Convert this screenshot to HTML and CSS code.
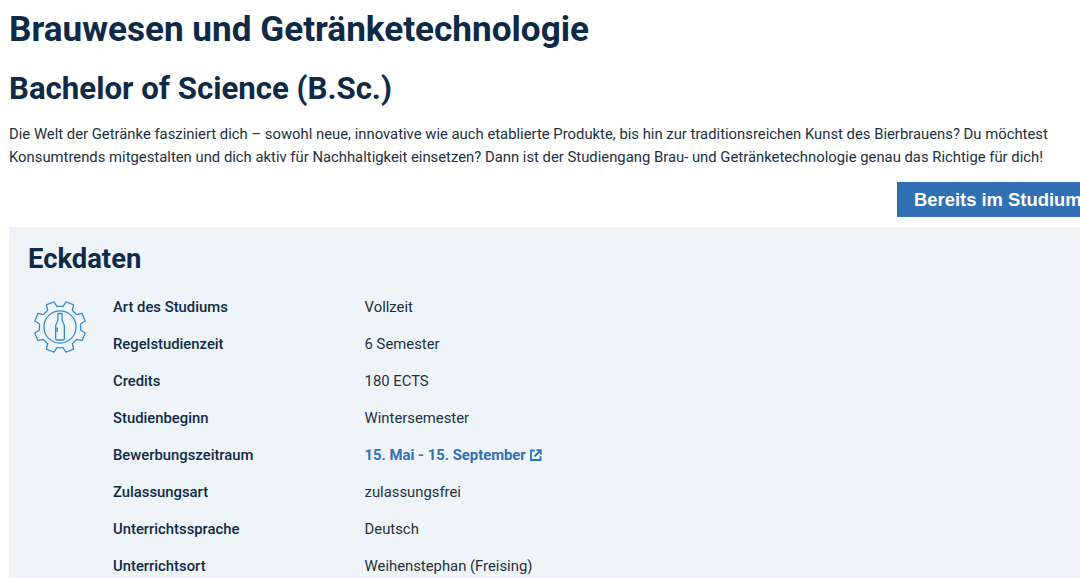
FILE: index.html
```html
<!DOCTYPE html>
<html>
<head>
    <meta charset="utf-8">
    <title>Brauwesen und Getränketechnologie</title>
    <link rel="stylesheet" href="styles.css">
</head>
<body>
    <div id="container">
        <h1>Brauwesen und Getränketechnologie</h1>
        <h2>Bachelor of Science (B.Sc.)</h2>
        <p class="intro">Die Welt der Getränke fasziniert dich – sowohl neue, innovative wie auch etablierte Produkte, bis hin zur traditionsreichen Kunst des Bierbrauens? Du möchtest Konsumtrends mitgestalten und dich aktiv für Nachhaltigkeit einsetzen? Dann ist der Studiengang Brau- und Getränketechnologie genau das Richtige für dich!</p>
        <div class="action-row">
            <a class="study-btn" href="#">Bereits im Studium</a>
        </div>
        <div class="facts">
            <h3>Eckdaten</h3>
            <div class="facts-body">
                <svg class="facts-icon" viewBox="-26 -26 52 52" fill="none" stroke="#3a8ac6" stroke-width="1.25" stroke-linejoin="round">
                    <path d="M19.78 2.96L24.31 5.84L21.32 13.06L16.08 11.9L11.9 16.08L13.06 21.32L5.84 24.31L2.96 19.78L-2.96 19.78L-5.84 24.31L-13.06 21.32L-11.9 16.08L-16.08 11.9L-21.32 13.06L-24.31 5.84L-19.78 2.96L-19.78 -2.96L-24.31 -5.84L-21.32 -13.06L-16.08 -11.9L-11.9 -16.08L-13.06 -21.32L-5.84 -24.31L-2.96 -19.78L2.96 -19.78L5.84 -24.31L13.06 -21.32L11.9 -16.08L16.08 -11.9L21.32 -13.06L24.31 -5.84L19.78 -2.96Z"/>
                    <circle r="15.500"/>
                    <path d="M-2 -13H2V-7C2 -4.5 4.200 -3.500 4.200 -0.500V11.500C4.200 12.100 3.800 12.500 3.200 12.500H-3.200C-3.800 12.500 -4.200 12.100 -4.200 11.500V-0.500C-4.200 -3.500 -2 -4.500 -2 -7Z"/>
                    <path d="M-4.200 1H-2.600V4H-4.200"/>
                </svg>
                <dl class="facts-list">
                    <div class="fact"><dt>Art des Studiums</dt><dd>Vollzeit</dd></div>
                    <div class="fact"><dt>Regelstudienzeit</dt><dd>6 Semester</dd></div>
                    <div class="fact"><dt>Credits</dt><dd>180 ECTS</dd></div>
                    <div class="fact"><dt>Studienbeginn</dt><dd>Wintersemester</dd></div>
                    <div class="fact">
                        <dt>Bewerbungszeitraum</dt>
                        <dd>
                            <a class="fact-link" href="#">15. Mai - 15. September
                                <svg class="ext-icon" viewBox="0 0 12 12" fill="none" stroke="#3070b3" stroke-width="1.8">
                                    <path d="M4.800 1.500H1V11H10.500V7.200"/>
                                    <path d="M4.500 7.500L10 2"/>
                                    <path d="M6.500 1.200H10.800V5.500"/>
                                </svg>
                            </a>
                        </dd>
                    </div>
                    <div class="fact"><dt>Zulassungsart</dt><dd>zulassungsfrei</dd></div>
                    <div class="fact"><dt>Unterrichtssprache</dt><dd>Deutsch</dd></div>
                    <div class="fact"><dt>Unterrichtsort</dt><dd>Weihenstephan (Freising)</dd></div>
                </dl>
            </div>
        </div>
    </div>
</body>
</html>
```

FILE: styles.css
```css
html, body {
    height: 100%;
}

body {
    margin: 0;
    font-family: 'Roboto', sans-serif;
    font-size: 14.83px;
    color: #0e2a47;
    background: #ffffff;
    overflow: hidden;
}

#container {
    padding: 9px 0 0 9px;
}

h1 {
    margin: 0;
    font-size: 35.14px;
    line-height: 40px;
    font-weight: 700;
    color: #0e2a47;
}

h2 {
    margin: 20px 0 0 0;
    font-size: 31.2px;
    line-height: 40px;
    font-weight: 700;
    color: #0e2a47;
}

.intro {
    margin: 14px 0 0 0;
    line-height: 23px;
    color: #22303f;
}

.action-row {
    display: flex;
    justify-content: flex-end;
    margin-top: 13px;
}

.study-btn {
    display: block;
    box-sizing: border-box;
    width: 183px;
    height: 35px;
    padding-left: 17px;
    background: #3070b3;
    color: #ffffff;
    font-family: 'Liberation Sans', Arial, sans-serif;
    font-size: 18.4px;
    font-weight: 700;
    line-height: 35px;
    white-space: nowrap;
    overflow: hidden;
    text-decoration: none;
}

.facts {
    margin-top: 10px;
    padding: 14px 19px 0 19px;
    background: #eff4f9;
}

.facts h3 {
    margin: 0;
    font-size: 27.4px;
    line-height: 36px;
    font-weight: 700;
    color: #0e2a47;
}

.facts-body {
    display: flex;
    margin-top: 12px;
}

.facts-icon {
    flex: none;
    width: 54px;
    height: 54px;
    margin: 11px 26px 0 5px;
}

.facts-list {
    margin: 0;
}

.fact {
    display: flex;
    height: 37px;
    line-height: 37px;
}

.fact dt {
    width: 251.6px;
    font-weight: 500;
    color: #0e2a47;
}

.fact dd {
    margin: 0;
    color: #22303f;
}

.fact-link {
    display: flex;
    align-items: center;
    gap: 4px;
    color: #3070b3;
    font-weight: 700;
    text-decoration: none;
}

.ext-icon {
    width: 12px;
    height: 12px;
    margin-bottom: 2px;
}
```
